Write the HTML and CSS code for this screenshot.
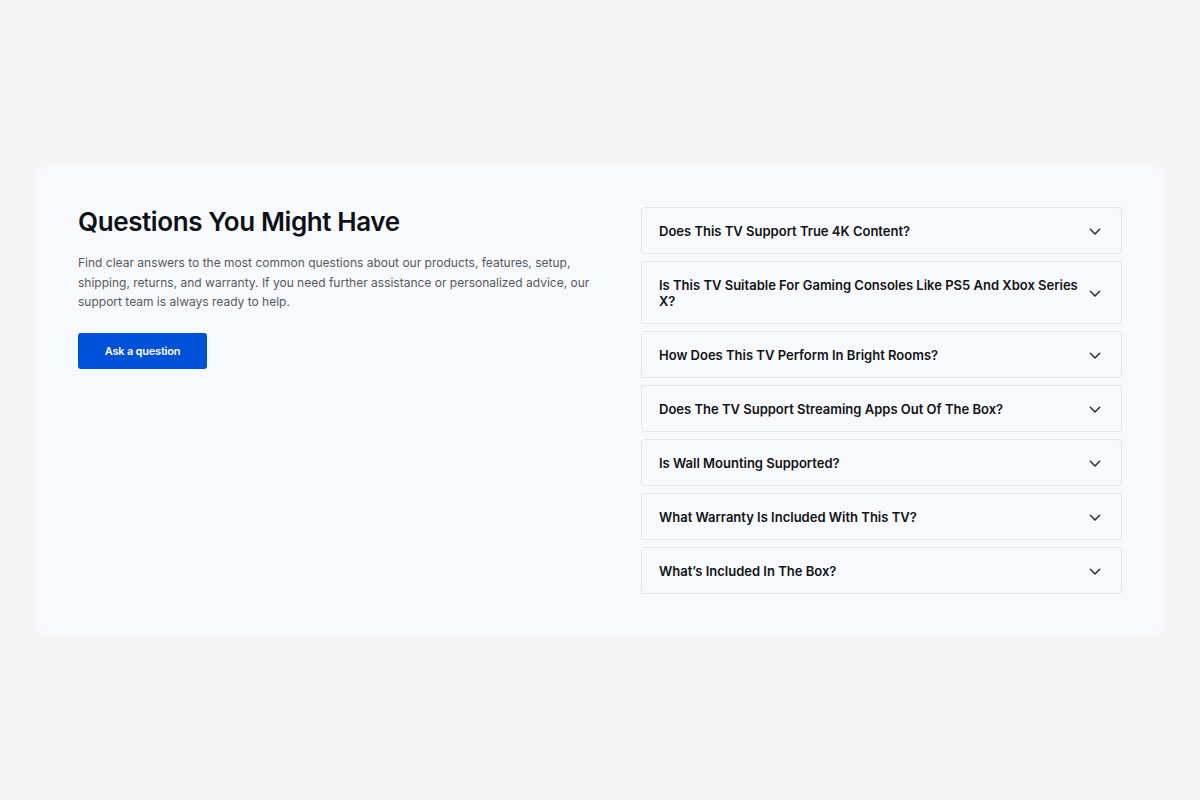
FILE: index.html
```html
<!DOCTYPE html>
<html lang="en">
<head>
    <meta charset="UTF-8">
    <meta name="viewport" content="width=device-width, initial-scale=1.0">
    <title>FAQ</title>
    <link rel="stylesheet" href="styles.css">
</head>
<body>
    <section class="faq">
        <div class="faq-intro">
            <h2>Questions You Might Have</h2>
            <p class="description">Find clear answers to the most common questions about our products, features, setup, shipping, returns, and warranty. If you need further assistance or personalized advice, our support team is always ready to help.</p>
            <a href="#" class="ask-btn">Ask a question</a>
        </div>

        <div class="faq-list">
            <div class="faq-item">
                <span>Does This TV Support True 4K Content?</span>
                <svg class="chevron" viewBox="0 0 12 12"><path d="M2 4.5l4 4 4-4"/></svg>
            </div>
            <div class="faq-item">
                <span>Is This TV Suitable For Gaming Consoles Like PS5 And Xbox Series X?</span>
                <svg class="chevron" viewBox="0 0 12 12"><path d="M2 4.5l4 4 4-4"/></svg>
            </div>
            <div class="faq-item">
                <span>How Does This TV Perform In Bright Rooms?</span>
                <svg class="chevron" viewBox="0 0 12 12"><path d="M2 4.5l4 4 4-4"/></svg>
            </div>
            <div class="faq-item">
                <span>Does The TV Support Streaming Apps Out Of The Box?</span>
                <svg class="chevron" viewBox="0 0 12 12"><path d="M2 4.5l4 4 4-4"/></svg>
            </div>
            <div class="faq-item">
                <span>Is Wall Mounting Supported?</span>
                <svg class="chevron" viewBox="0 0 12 12"><path d="M2 4.5l4 4 4-4"/></svg>
            </div>
            <div class="faq-item">
                <span>What Warranty Is Included With This TV?</span>
                <svg class="chevron" viewBox="0 0 12 12"><path d="M2 4.5l4 4 4-4"/></svg>
            </div>
            <div class="faq-item">
                <span>What’s Included In The Box?</span>
                <svg class="chevron" viewBox="0 0 12 12"><path d="M2 4.5l4 4 4-4"/></svg>
            </div>
        </div>
    </section>
</body>
</html>
```

FILE: styles.css
```css
body {
    font-family: 'Inter', sans-serif;
    margin: 0;
    padding: 165px 36px;
    background: #f5f5f5;
    min-height: 100vh;
    box-sizing: border-box;
}

.faq {
    display: grid;
    grid-template-columns: 1fr 481px;
    gap: 40px;
    align-items: start;
    background: #f8f9fc;
    border-radius: 16px;
    padding: 42px;
}

.faq-intro h2 {
    margin: 0;
    font-size: 26px;
    font-weight: 600;
    line-height: 30px;
    letter-spacing: -0.4px;
    color: #0d1117;
}

.description {
    margin: 16px 0 21px;
    font-size: 12px;
    line-height: 19.5px;
    color: #565a62;
}

.ask-btn {
    display: inline-block;
    width: 129px;
    height: 36px;
    line-height: 36px;
    text-align: center;
    background: #0050d8;
    color: white;
    font-size: 11px;
    font-weight: 600;
    letter-spacing: -0.2px;
    text-decoration: none;
    border-radius: 3px;
}

.faq-list {
    display: flex;
    flex-direction: column;
    gap: 7px;
}

.faq-item {
    display: flex;
    align-items: center;
    justify-content: space-between;
    gap: 6px;
    padding: 14.5px 19px 14.5px 17px;
    border: 1px solid #e3e6ec;
    border-radius: 3px;
    background: #f8f9fc;
    font-size: 13px;
    font-weight: 600;
    line-height: 16px;
    color: #111318;
}

.chevron {
    flex: none;
    width: 14px;
    height: 14px;
    fill: none;
    stroke: #2a2d33;
    stroke-width: 1.3;
    stroke-linecap: round;
    stroke-linejoin: round;
}
```
